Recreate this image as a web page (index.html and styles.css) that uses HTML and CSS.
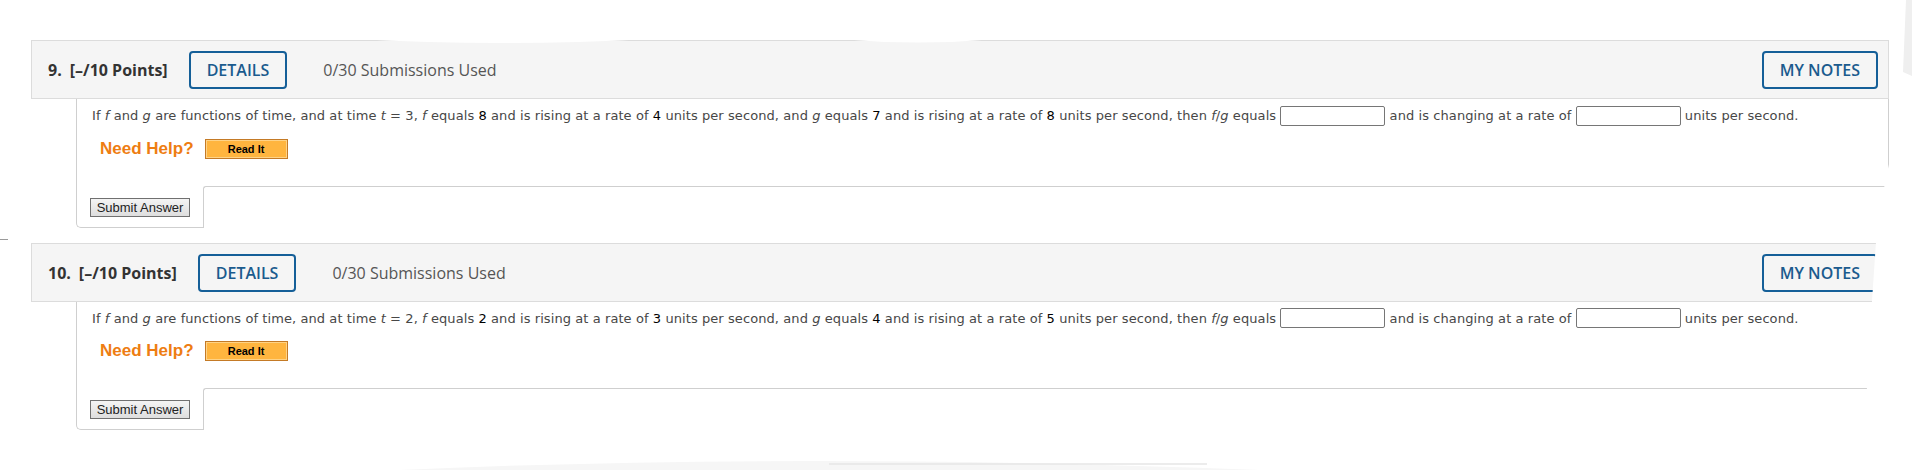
FILE: index.html
```html
<!DOCTYPE html>
<html lang="en">
<head>
<meta charset="utf-8">
<title>Questions</title>
<link rel="stylesheet" href="styles.css">
</head>
<body>
<div class="page">
  <section class="question">
    <div class="q-head">
      <span class="q-num">9.</span><span class="q-points">[–/10 Points]</span>
      <button class="btn-outline details">DETAILS</button>
      <span class="q-subs">0/30 Submissions Used</span>
      <button class="btn-outline notes">MY NOTES</button>
    </div>
    <div class="q-body">
      <p class="q-text">If <i>f</i> and <i>g</i> are functions of time, and at time <i>t</i> = 3, <i>f</i> equals <span class="num">8</span> and is rising at a rate of <span class="num">4</span> units per second, and <i>g</i> equals <span class="num">7</span> and is rising at a rate of <span class="num">8</span> units per second, then <i>f</i>/<i>g</i> equals <input class="ans" type="text"> and is changing at a rate of <input class="ans" type="text"> units per second.</p>
      <div class="help"><span class="help-label">Need Help?</span><button class="read-it">Read It</button></div>
    </div>
    <div class="q-foot">
      <div class="submit-cell"><button class="submit">Submit Answer</button></div>
      <div class="foot-fill"></div>
    </div>
  </section>

  <section class="question">
    <div class="q-head">
      <span class="q-num">10.</span><span class="q-points">[–/10 Points]</span>
      <button class="btn-outline details">DETAILS</button>
      <span class="q-subs">0/30 Submissions Used</span>
      <button class="btn-outline notes">MY NOTES</button>
    </div>
    <div class="q-body">
      <p class="q-text">If <i>f</i> and <i>g</i> are functions of time, and at time <i>t</i> = 2, <i>f</i> equals <span class="num">2</span> and is rising at a rate of <span class="num">3</span> units per second, and <i>g</i> equals <span class="num">4</span> and is rising at a rate of <span class="num">5</span> units per second, then <i>f</i>/<i>g</i> equals <input class="ans" type="text"> and is changing at a rate of <input class="ans" type="text"> units per second.</p>
      <div class="help"><span class="help-label">Need Help?</span><button class="read-it">Read It</button></div>
    </div>
    <div class="q-foot">
      <div class="submit-cell"><button class="submit">Submit Answer</button></div>
      <div class="foot-fill"></div>
    </div>
  </section>

  <svg class="overlay" width="1912" height="470" viewBox="0 0 1912 470" aria-hidden="true">
    <path d="M356,39 Q500,47 649,39 Z" fill="#ffffff"/>
    <path d="M839,39 Q918,46 997,39 Z" fill="#ffffff"/>
    <path d="M1912,160 L1890,160 C1884,185 1879,215 1876,242 L1872,301 L1867,387 L1863,470 L1912,470 Z" fill="#ffffff"/>
    <path d="M1906,0 L1912,0 L1912,76 L1903,72 Z" fill="#efefef"/>
    <path d="M400,470 Q800,452 1260,470 Z" fill="#f6f6f6"/>
    <path d="M829,464 L1207,464" stroke="#e6e6e6" stroke-width="1.5"/>
    <path d="M0,239.5 L8,239.5" stroke="#9a9a9a" stroke-width="1"/>
  </svg>
</div>
</body>
</html>
```

FILE: styles.css
```css
html, body {
  margin: 0;
  padding: 0;
  background: #ffffff;
  overflow: hidden;
}

.page {
  position: relative;
  width: 1912px;
  height: 470px;
  box-sizing: border-box;
  padding: 40px 0 0 31px;
}

.question {
  width: 1858px;
  margin-bottom: 15px;
}

.q-head {
  display: flex;
  align-items: center;
  box-sizing: border-box;
  height: 59px;
  padding: 1px 10px 0 16px;
  background: #f5f5f5;
  border: 1px solid #dcdcdc;
  font-family: "Open Sans", sans-serif;
  font-size: 16px;
  color: #333333;
}

.q-num {
  font-weight: 700;
  margin-right: 8px;
}

.q-points {
  font-weight: 700;
}

.btn-outline {
  height: 38px;
  box-sizing: border-box;
  padding: 0 16px;
  background: transparent;
  border: 2px solid #155f98;
  border-radius: 4px;
  font-family: "Open Sans", sans-serif;
  font-size: 16px;
  font-weight: 600;
  color: #1b5b8e;
}

.details {
  margin-left: 21px;
}

.q-subs {
  margin-left: 36px;
  color: #555555;
}

.notes {
  margin-left: auto;
}

.q-body {
  margin-left: 45px;
  border-left: 1px solid #cfcfcf;
  border-right: 1px solid #cfcfcf;
  padding: 7px 15px 12px 15px;
}

.q-text {
  margin: 0;
  line-height: 20px;
  font-family: "DejaVu Sans", Verdana, sans-serif;
  font-size: 13px;
  letter-spacing: 0.08px;
  color: #474747;
  white-space: nowrap;
}

.q-text i {
  font-style: italic;
}

.q-text .num {
  color: #000000;
}

.ans {
  width: 105px;
  height: 20px;
  box-sizing: border-box;
  margin: 0;
  padding: 0 3px;
  border: 1px solid #767676;
  border-radius: 2px;
  background: #ffffff;
  vertical-align: middle;
  position: relative;
  top: -1px;
}

.help {
  display: flex;
  align-items: center;
  gap: 11px;
  height: 20px;
  margin-top: 12px;
  padding-left: 8px;
}

.help-label {
  font-family: "Liberation Sans", Arial, sans-serif;
  font-size: 17px;
  font-weight: 700;
  color: #ee7d12;
}

.read-it {
  width: 83px;
  height: 20px;
  box-sizing: border-box;
  margin: 0;
  padding: 0;
  background: #ffb53f;
  border: 1px solid #c47a26;
  box-shadow: inset 0 0 0 1px #ffd386;
  font-family: "Liberation Sans", Arial, sans-serif;
  font-size: 11px;
  font-weight: 700;
  color: #000000;
}

.q-foot {
  display: flex;
  margin-left: 45px;
}

.submit-cell {
  width: 127px;
  box-sizing: border-box;
  padding: 27px 0 10px 13px;
  border-left: 1px solid #cfcfcf;
  border-bottom: 1px solid #cfcfcf;
  border-bottom-left-radius: 5px;
}

.submit {
  display: block;
  width: 100px;
  height: 19px;
  box-sizing: border-box;
  margin: 0;
  padding: 0;
  background: linear-gradient(#f4f4f4, #dedede);
  border: 1px solid #707070;
  font-family: "Liberation Sans", Arial, sans-serif;
  font-size: 13px;
  color: #222222;
}

.foot-fill {
  flex: 1;
  margin-top: 15px;
  border-top: 1px solid #cfcfcf;
  border-left: 1px solid #cfcfcf;
  border-top-left-radius: 3px;
}

.overlay {
  position: absolute;
  top: 0;
  left: 0;
  pointer-events: none;
}
```
